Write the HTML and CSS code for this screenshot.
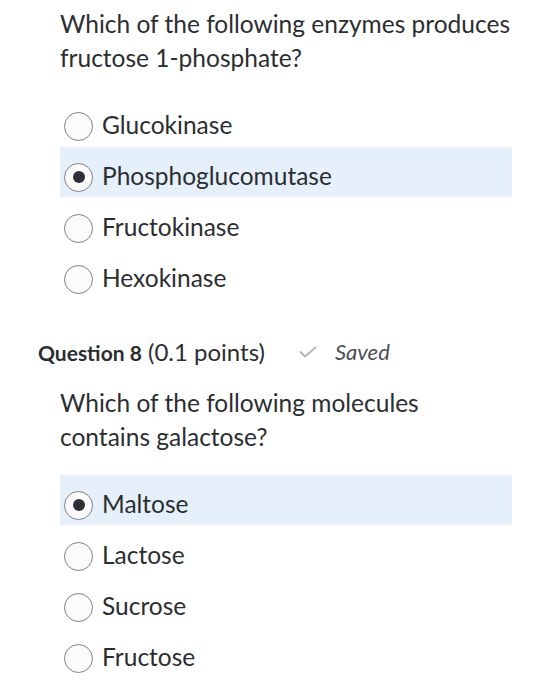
FILE: index.html
```html
<!DOCTYPE html>
<html>
<head>
<meta charset="utf-8">
<link rel="stylesheet" href="styles.css">
</head>
<body>
<div class="page">
  <section class="question first">
    <p class="prompt">Which of the following enzymes produces fructose 1-phosphate?</p>
    <ul class="options">
      <li class="option"><span class="radio"></span><span class="label">Glucokinase</span></li>
      <li class="option selected"><span class="radio"><span class="dot"></span></span><span class="label">Phosphoglucomutase</span></li>
      <li class="option"><span class="radio"></span><span class="label">Fructokinase</span></li>
      <li class="option"><span class="radio"></span><span class="label">Hexokinase</span></li>
    </ul>
  </section>
  <header class="qheader">
    <span class="qtitle"><b>Question 8</b> (0.1 points)</span>
    <span class="saved">
      <svg class="check" width="18" height="12" viewBox="0 0 18 12"><path d="M1.5 6 L6 10.5 L16.5 1.5" fill="none" stroke="#b3b8bc" stroke-width="2" stroke-linecap="round" stroke-linejoin="round"/></svg>
      <i>Saved</i>
    </span>
  </header>
  <section class="question second">
    <p class="prompt">Which of the following molecules contains galactose?</p>
    <ul class="options">
      <li class="option selected"><span class="radio"><span class="dot"></span></span><span class="label">Maltose</span></li>
      <li class="option"><span class="radio"></span><span class="label">Lactose</span></li>
      <li class="option"><span class="radio"></span><span class="label">Sucrose</span></li>
      <li class="option"><span class="radio"></span><span class="label">Fructose</span></li>
    </ul>
  </section>
</div>
</body>
</html>
```

FILE: styles.css
```css
* { box-sizing: border-box; }
html, body { margin: 0; padding: 0; background: #fff; }
body {
  font-family: Lato, "Open Sans", sans-serif;
  color: #2b2e31;
}
.page { width: 544px; height: 700px; overflow: hidden; }
.question { padding: 0 32px 0 60px; }
.question.first { padding-top: 7px; }
.prompt {
  margin: 0;
  font-size: 24.5px;
  line-height: 34px;
  width: 453px;
}
.options {
  list-style: none;
  margin: 21px 0 0 0;
  padding: 0;
  width: 452px;
}
.option {
  display: flex;
  align-items: flex-start;
  height: 50px;
  margin-bottom: 1px;
  padding-left: 4px;
  font-size: 24.5px;
}
.option.selected { background: #e6f0fa; }
.radio {
  width: 29px;
  height: 29px;
  margin-top: 15.5px;
  border: 1.5px solid #7d8185;
  border-radius: 50%;
  background: #fbfbfc;
  display: flex;
  align-items: center;
  justify-content: center;
  flex: none;
  margin-right: 9px;
}
.dot {
  width: 12px;
  height: 12px;
  border-radius: 50%;
  background: #2d3034;
}
.label { line-height: 30px; margin-top: 13.5px; }
.qheader {
  display: flex;
  align-items: center;
  padding-left: 38px;
  margin-top: 32px;
  height: 40px;
}
.qtitle { font-size: 24px; }
.qtitle b { font-weight: 700; font-size: 21px; }
.saved {
  display: flex;
  align-items: center;
  margin-left: 34px;
  font-size: 22px;
  color: #4a4f54;
}
.check { margin-right: 18px; margin-top: 2px; }
.question.second { padding-top: 15px; }
```
